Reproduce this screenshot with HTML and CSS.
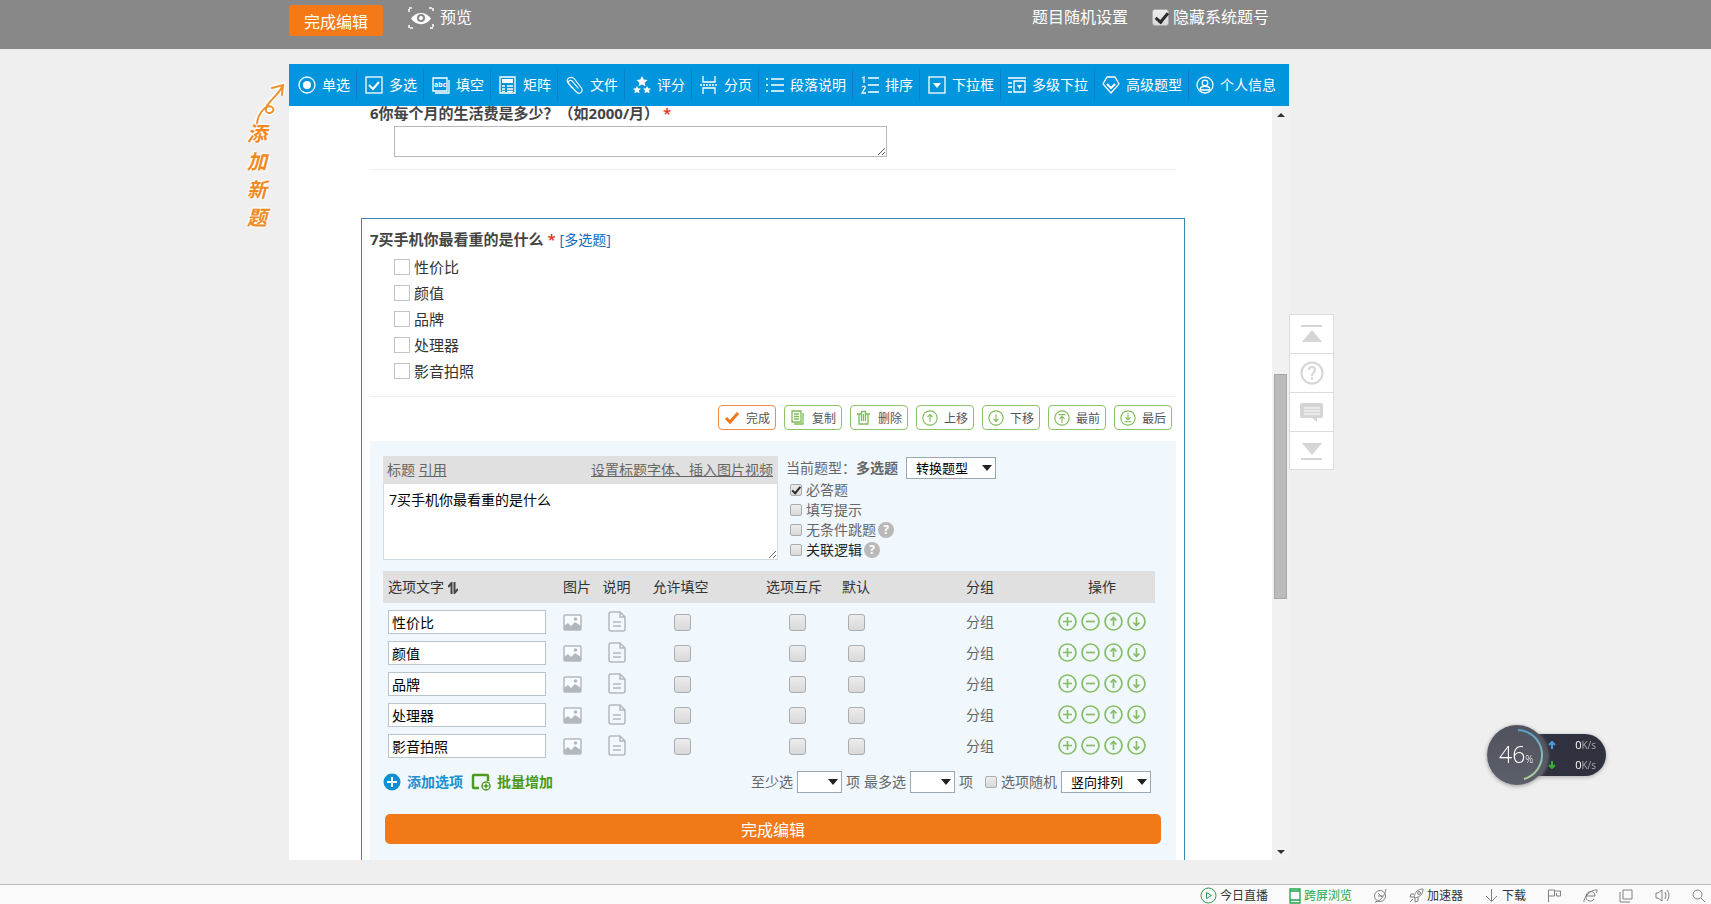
FILE: index.html
```html
<!DOCTYPE html>
<html lang="zh-CN">
<head>
<meta charset="utf-8">
<title>问卷编辑</title>
<link rel="stylesheet" href="styles.css">
</head>
<body>
<svg class="defs" aria-hidden="true">
  <symbol id="pic" viewBox="0 0 19 17"><rect x="1" y="1" width="17" height="15" rx="1" fill="#f8fcff" stroke="#b2b8bd" stroke-width="1.5"/><circle cx="12.500" cy="5" r="1.800" fill="#b2b8bd"/><path d="M1 16v-4l4-3 3 3 4-4 6 4v4z" fill="#b2b8bd"/></symbol>
  <symbol id="doc" viewBox="0 0 18 21"><path d="M3 1h9l5 5v12a2 2 0 0 1-2 2H3a2 2 0 0 1-2-2V3a2 2 0 0 1 2-2zM12 1v5h5M5 11h8M5 15h8" fill="none" stroke="#b2b8bd" stroke-width="1.500"/></symbol>
  <symbol id="plus" viewBox="0 0 19 19"><circle cx="9.500" cy="9.500" r="8.500"/><path d="M5 9.500h9M9.500 5v9"/></symbol>
  <symbol id="minus" viewBox="0 0 19 19"><circle cx="9.500" cy="9.500" r="8.500"/><path d="M5 9.500h9"/></symbol>
  <symbol id="up" viewBox="0 0 19 19"><circle cx="9.500" cy="9.500" r="8.500"/><path d="M9.500 14V5.500M6.500 8.500l3-3 3 3"/></symbol>
  <symbol id="down" viewBox="0 0 19 19"><circle cx="9.500" cy="9.500" r="8.500"/><path d="M9.500 5v8.500M6.500 10.500l3 3 3-3"/></symbol>
  <symbol id="first" viewBox="0 0 19 19"><circle cx="9.500" cy="9.500" r="8.500"/><path d="M5.500 5.500h8M9.500 15V7.500M6.500 10.500l3-3 3 3"/></symbol>
  <symbol id="last" viewBox="0 0 19 19"><circle cx="9.500" cy="9.500" r="8.500"/><path d="M5.500 14h8M9.500 4v7.500M6.500 8.500l3 3 3-3"/></symbol>
</svg>

<header class="topbar">
  <button class="btn-done" type="button">完成编辑</button>
  <a class="preview" href="#">
    <svg width="26" height="22" viewBox="0 0 26 22"><path d="M1 5V1h4M21 1h4v4M25 17v4h-4M5 21H1v-4" fill="none" stroke="#fff" stroke-width="1.500" stroke-dasharray="3 1"/><path d="M3 11.500C8 4 18 4 23 11.500 18 19 8 19 3 11.500z" fill="#fff"/><circle cx="13" cy="11" r="4" fill="#888"/><circle cx="13" cy="11" r="2" fill="#fff"/></svg>
    预览</a>
  <div class="top-right">
    <a href="#">题目随机设置</a>
    <label><input type="checkbox" class="cb cb-top" checked>隐藏系统题号</label>
  </div>
</header>

<div class="stage">
  <aside class="hint">
    <svg width="32" height="44" viewBox="0 0 32 44"><path d="M3 42C4 30 13 22 18 25c5 4-4 9-6 4C10 22 24 14 28 5M18 6l11-3-1 10" fill="none" stroke="#fff" stroke-width="5"/><path d="M3 42C4 30 13 22 18 25c5 4-4 9-6 4C10 22 24 14 28 5M18 6l11-3-1 10" fill="none" stroke="#f0912f" stroke-width="2" stroke-linecap="round"/></svg>
    <div class="hint-text"><span>添</span><span>加</span><span>新</span><span>题</span></div>
  </aside>

  <main class="editor">
    <nav class="toolbar">
      <a href="#"><svg width="18" height="18" viewBox="0 0 18 18"><circle cx="9" cy="9" r="8"/><circle cx="9" cy="9" r="4" class="f"/></svg>单选</a>
      <a href="#"><svg width="18" height="18" viewBox="0 0 18 18"><rect x="1" y="1" width="16" height="16"/><path d="M4 9l4 4 6-7" stroke-width="2"/></svg>多选</a>
      <a href="#"><svg width="18" height="18" viewBox="0 0 18 18"><path d="M1 2h14v13H1zM3 17h14V4"/><text x="2" y="11" class="abc">abc</text></svg>填空</a>
      <a href="#"><svg width="18" height="18" viewBox="0 0 18 18"><path d="M1 1h15v16H1z"/><path d="M3 3h11v4H3z" class="f"/><path d="M3 10h3M8 10h6M3 13h3M8 13h6M3 15.500h3M8 15.500h6"/></svg>矩阵</a>
      <a href="#"><svg width="18" height="18" viewBox="0 0 18 18"><path d="M12.500 12.500L6 5a2 2 0 0 0-3 3l7.500 8c3 3 7 0 5-4L8.500 3C5-1-1 3 2 7l4 5" stroke-width="1.100"/></svg>文件</a>
      <a href="#"><svg width="18" height="18" viewBox="0 0 18 18"><path class="f" d="M9 0l1.700 3.400 3.800.5-2.800 2.600.7 3.700L9 8.400l-3.400 1.800.7-3.700L3.500 3.900l3.800-.5zM4 10l1.200 2.300 2.800.4-2 1.900.5 2.700L4 16l-2.500 1.300.5-2.700-2-1.900 2.800-.4zM14 10l1.200 2.300 2.800.4-2 1.900.5 2.700L14 16l-2.500 1.300.5-2.700-2-1.900 2.800-.4z"/></svg>评分</a>
      <a href="#"><svg width="18" height="18" viewBox="0 0 18 18"><path d="M3 0v6h12V0M3 18v-6h12v6"/><path d="M0 9h18" stroke-dasharray="2 1"/></svg>分页</a>
      <a href="#" class="wide"><svg width="18" height="18" viewBox="0 0 18 18"><path d="M5 3h13M5 9h13M5 15h13M0 3h2M0 9h2M0 15h2"/></svg>段落说明</a>
      <a href="#"><svg width="18" height="18" viewBox="0 0 18 18"><path d="M7 2h11M7 9h11M7 16h11M1 2l2-1v6M1 11q4-2 3 1l-3 5h4"/></svg>排序</a>
      <a href="#"><svg width="18" height="18" viewBox="0 0 18 18"><rect x="1" y="1" width="16" height="16"/><path class="f" d="M5 7h8l-4 5z"/></svg>下拉框</a>
      <a href="#" class="wide"><svg width="18" height="18" viewBox="0 0 18 18"><path d="M0 2h18M0 7h4M0 11h4M0 16h4M6 5h11v11H6z"/><path class="f" d="M9 9h5l-2.500 4z"/></svg>多级下拉</a>
      <a href="#" class="wide"><svg width="18" height="18" viewBox="0 0 18 18"><path d="M5 1h8l4 7-8 9-8-9z"/><path d="M5 8l4 4 4-4" stroke-width="2"/></svg>高级题型</a>
      <a href="#" class="wide"><svg width="18" height="18" viewBox="0 0 18 18"><circle cx="9" cy="9" r="8"/><circle cx="9" cy="7" r="2.800"/><path d="M4 14c0-5 10-5 10 0z"/></svg>个人信息</a>
    </nav>

    <div class="viewport">
      <div class="sheet">
        <section class="q6">
          <h2 class="q-title"><label for="a6">6你每个月的生活费是多少？（如2000/月）</label> <b class="req">*</b></h2>
          <textarea id="a6" class="answer"></textarea>
        </section>

        <section class="q7">
          <h2 class="q-title">7买手机你最看重的是什么 <b class="req">*</b> <span class="kind">[多选题]</span></h2>
          <div class="choices">
            <label><input type="checkbox" class="plain">性价比</label>
            <label><input type="checkbox" class="plain">颜值</label>
            <label><input type="checkbox" class="plain">品牌</label>
            <label><input type="checkbox" class="plain">处理器</label>
            <label><input type="checkbox" class="plain">影音拍照</label>
          </div>
          <div class="actions">
            <button type="button" class="primary"><svg width="16" height="16" viewBox="0 0 16 16"><path d="M2 8l4 4 8-9" stroke="#f07818" stroke-width="3"/></svg>完成</button>
            <button type="button"><svg width="16" height="16" viewBox="0 0 16 16"><path d="M2 1h9v11H2zM4 4h5M4 6.500h5M4 9h5M13 3v11H4"/></svg>复制</button>
            <button type="button"><svg width="16" height="16" viewBox="0 0 16 16"><path d="M1 4h4M10 4h4M3 4v10h9V4M5.500 11V1.500h4V11M7.500 4v7"/></svg>删除</button>
            <button type="button"><svg width="16" height="16"><use href="#up"/></svg>上移</button>
            <button type="button"><svg width="16" height="16"><use href="#down"/></svg>下移</button>
            <button type="button"><svg width="16" height="16"><use href="#first"/></svg>最前</button>
            <button type="button"><svg width="16" height="16"><use href="#last"/></svg>最后</button>
          </div>

          <div class="config">
            <div class="config-top">
              <div class="title-box">
                <div class="title-head"><span><label for="ttl">标题</label> <a href="#">引用</a></span><a href="#">设置标题字体、插入图片视频</a></div>
                <textarea id="ttl">7买手机你最看重的是什么</textarea>
              </div>
              <div class="settings">
                <div class="type-row"><label for="type">当前题型：<b>多选题</b></label><span class="sel sel-wide"><select id="type"><option>转换题型</option></select></span></div>
                <label><input type="checkbox" class="cb cb-s" checked>必答题</label>
                <label><input type="checkbox" class="cb cb-s">填写提示</label>
                <label><input type="checkbox" class="cb cb-s">无条件跳题<i class="help">?</i></label>
                <label class="dark"><input type="checkbox" class="cb cb-s">关联逻辑<i class="help">?</i></label>
              </div>
            </div>

            <table class="opts">
              <colgroup><col class="c1"><col class="c2"><col class="c3"><col class="c4"><col class="c5"><col class="c6"><col class="c7"><col class="c8"></colgroup>
              <thead><tr><th>选项文字 <svg width="10" height="12" viewBox="0 0 10 12"><path d="M3.500 12V1L0 5M6.500 0v11L10 7" fill="none" stroke="#444" stroke-width="2"/></svg></th><th>图片</th><th>说明</th><th>允许填空</th><th>选项互斥</th><th>默认</th><th>分组</th><th>操作</th></tr></thead>
              <tbody>
                <tr><td><input type="text" aria-label="选项文字" value="性价比"></td><td><svg width="19" height="17"><use href="#pic"/></svg></td><td><svg width="18" height="21"><use href="#doc"/></svg></td><td><input type="checkbox" class="cb" aria-label="允许填空"></td><td><input type="checkbox" class="cb" aria-label="选项互斥"></td><td><input type="checkbox" class="cb" aria-label="默认"></td><td>分组</td><td><div class="ops"><svg><use href="#plus"/></svg><svg><use href="#minus"/></svg><svg><use href="#up"/></svg><svg><use href="#down"/></svg></div></td></tr>
                <tr><td><input type="text" aria-label="选项文字" value="颜值"></td><td><svg width="19" height="17"><use href="#pic"/></svg></td><td><svg width="18" height="21"><use href="#doc"/></svg></td><td><input type="checkbox" class="cb" aria-label="允许填空"></td><td><input type="checkbox" class="cb" aria-label="选项互斥"></td><td><input type="checkbox" class="cb" aria-label="默认"></td><td>分组</td><td><div class="ops"><svg><use href="#plus"/></svg><svg><use href="#minus"/></svg><svg><use href="#up"/></svg><svg><use href="#down"/></svg></div></td></tr>
                <tr><td><input type="text" aria-label="选项文字" value="品牌"></td><td><svg width="19" height="17"><use href="#pic"/></svg></td><td><svg width="18" height="21"><use href="#doc"/></svg></td><td><input type="checkbox" class="cb" aria-label="允许填空"></td><td><input type="checkbox" class="cb" aria-label="选项互斥"></td><td><input type="checkbox" class="cb" aria-label="默认"></td><td>分组</td><td><div class="ops"><svg><use href="#plus"/></svg><svg><use href="#minus"/></svg><svg><use href="#up"/></svg><svg><use href="#down"/></svg></div></td></tr>
                <tr><td><input type="text" aria-label="选项文字" value="处理器"></td><td><svg width="19" height="17"><use href="#pic"/></svg></td><td><svg width="18" height="21"><use href="#doc"/></svg></td><td><input type="checkbox" class="cb" aria-label="允许填空"></td><td><input type="checkbox" class="cb" aria-label="选项互斥"></td><td><input type="checkbox" class="cb" aria-label="默认"></td><td>分组</td><td><div class="ops"><svg><use href="#plus"/></svg><svg><use href="#minus"/></svg><svg><use href="#up"/></svg><svg><use href="#down"/></svg></div></td></tr>
                <tr><td><input type="text" aria-label="选项文字" value="影音拍照"></td><td><svg width="19" height="17"><use href="#pic"/></svg></td><td><svg width="18" height="21"><use href="#doc"/></svg></td><td><input type="checkbox" class="cb" aria-label="允许填空"></td><td><input type="checkbox" class="cb" aria-label="选项互斥"></td><td><input type="checkbox" class="cb" aria-label="默认"></td><td>分组</td><td><div class="ops"><svg><use href="#plus"/></svg><svg><use href="#minus"/></svg><svg><use href="#up"/></svg><svg><use href="#down"/></svg></div></td></tr>
              </tbody>
            </table>

            <div class="opt-foot">
              <a href="#" class="add"><svg width="18" height="18" viewBox="0 0 18 18"><circle cx="9" cy="9" r="8.500" fill="#0e8fd0"/><path d="M4 9h10M9 4v10" stroke="#fff" stroke-width="2"/></svg>添加选项</a>
              <a href="#" class="batch"><svg width="20" height="18" viewBox="0 0 20 18"><path d="M8 15H3a1 1 0 0 1-1-1V3a1 1 0 0 1 1-1h13a1 1 0 0 1 1 1v5" fill="none" stroke="#4d9a1c" stroke-width="2.500"/><circle cx="15" cy="13" r="4" fill="#fff" stroke="#4d9a1c" stroke-width="1.500"/><path d="M12.500 13h5M15 10.500v5" stroke="#4d9a1c" stroke-width="1.500"/></svg>批量增加</a>
              <div class="limits">
                <label for="min">至少选</label><span class="sel sel-s"><select id="min"><option></option></select></span><span>项</span>
                <label for="max" class="max">最多选</label><span class="sel sel-s"><select id="max"><option></option></select></span><span>项</span>
                <label class="rand"><input type="checkbox" class="cb cb-s">选项随机</label>
                <span class="sel sel-wide"><select aria-label="排列方式"><option>竖向排列</option></select></span>
              </div>
            </div>
            <button type="button" class="finish">完成编辑</button>
          </div>
        </section>
      </div>
      <div class="scroll"><i class="tri-up"></i><i class="thumb"></i><i class="tri-down"></i></div>
    </div>
  </main>

  <aside class="side">
    <a href="#" aria-label="顶部"><svg width="24" height="24" viewBox="0 0 24 24"><path d="M1 3h21v2H1zM12 8l10 12H2z"/></svg></a>
    <a href="#" aria-label="帮助"><svg width="24" height="24" viewBox="0 0 24 24"><path d="M9 9c0-4 6-4 6 0 0 3-3 2-3 6M12 16v3" fill="none" stroke="#d5d5d5" stroke-width="2"/><circle cx="12" cy="12" r="10.500" fill="none" stroke="#d5d5d5" stroke-width="2"/></svg></a>
    <a href="#" aria-label="反馈"><svg width="24" height="24" viewBox="0 0 24 24"><path d="M2 3h19a2 2 0 0 1 2 2v11a2 2 0 0 1-2 2h-4v4l-5-4H2a2 2 0 0 1-2-2V5a2 2 0 0 1 2-2z"/><path d="M4 8h16M4 11h16M4 14h16" stroke="#fff"/></svg></a>
    <a href="#" aria-label="底部"><svg width="24" height="24" viewBox="0 0 24 24"><path d="M1 19h21v2H1zM12 16L2 4h20z"/></svg></a>
  </aside>
</div>

<footer class="status">
  <a href="#"><svg width="17" height="17" viewBox="0 0 17 17"><circle cx="8.500" cy="8.500" r="7.500"/><path d="M6.500 5.500l5 3-5 3z"/></svg>今日直播</a>
  <a href="#" class="green"><svg width="12" height="16" viewBox="0 0 12 16"><path d="M1 1h10v14H1zM1 3h10M1 12h10" stroke-width="1.300"/></svg>跨屏浏览</a>
  <a href="#" aria-label="诊断"><svg width="15" height="15" viewBox="0 0 15 15"><circle cx="7" cy="8" r="5.500"/><path d="M2 14C8 13 12 7 13 1M5 5l4 4M5 8h5"/></svg></a>
  <a href="#"><svg width="15" height="15" viewBox="0 0 15 15"><path d="M5 9C6 4 9 1 14 1c0 5-3 8-8 9zM5 6H2l-1 3h4M9 9v4l-3 1v-4M1 14l3-3"/><circle cx="10" cy="5" r="1.500"/></svg>加速器</a>
  <a href="#"><svg width="15" height="15" viewBox="0 0 15 15"><path d="M7.500 1v12M2 8l5.500 5.500L13 8"/></svg>下载</a>
  <a href="#" aria-label="旗标"><svg width="15" height="15" viewBox="0 0 15 15"><path d="M1.500 14V2h6v6h-6M7.500 3h6v5h-4V5"/></svg></a>
  <a href="#" aria-label="内核"><svg width="15" height="15" viewBox="0 0 15 15"><path d="M3 8h9c0-6-8-6-9 0-1 5 6 7 8 3M1 14C0 10 8 1 14 2c0 1 0 2-1 3"/></svg></a>
  <a href="#" aria-label="窗口"><svg width="15" height="15" viewBox="0 0 15 15"><path d="M4 2h9v9H4zM1 4v10h10"/></svg></a>
  <a href="#" aria-label="声音"><svg width="15" height="15" viewBox="0 0 15 15"><path d="M1 5h2l4-3v11l-4-3H1zM10 4q2 3 0 7M12 2q4 5 0 11"/></svg></a>
  <a href="#" aria-label="搜索"><svg width="15" height="15" viewBox="0 0 15 15"><circle cx="6.500" cy="6.500" r="4.500"/><path d="M10 10l4 4"/></svg></a>
</footer>

<div class="meter">
  <div class="meter-pill">
    <span><svg width="8" height="8" viewBox="0 0 8 8"><path d="M4 8V2M1 4l3-3 3 3" stroke="#4b9be0"/></svg>0<small>K/s</small></span>
    <span><svg width="8" height="8" viewBox="0 0 8 8"><path d="M4 0v6M1 4l3 3 3-3" stroke="#37b035"/></svg>0<small>K/s</small></span>
  </div>
  <div class="meter-dial">46<small>%</small>
    <svg class="arc" viewBox="0 0 60 60"><defs><linearGradient id="g" x1="0" y1="0" x2="0" y2="1"><stop offset="0" stop-color="#5a9fc8"/><stop offset="1" stop-color="#b5d49a"/></linearGradient></defs><path d="M31 5a25 25 0 0 1 6 49" fill="none" stroke="url(#g)" stroke-width="2"/></svg>
  </div>
</div>
</body>
</html>
```
FILE: styles.css
```css
* { box-sizing: border-box; }
body {
  margin: 0;
  height: 100vh;
  display: flex;
  flex-direction: column;
  overflow: hidden;
  background: #efefef;
  color: #444;
  font: 14px/20px "Open Sans", "Noto Sans CJK SC", sans-serif;
}
a { color: inherit; text-decoration: none; }
svg { flex: none; }
button, input, select, textarea { font-family: inherit; margin: 0; }
.defs { display: none; }

.topbar {
  flex: none;
  height: 49px;
  padding: 5px 0 0 289px;
  display: flex;
  align-items: flex-start;
  background: #888;
  color: #fff;
  font-size: 16px;
  line-height: 24px;
}
.btn-done {
  width: 94px;
  height: 31px;
  padding: 0;
  border: 0;
  border-radius: 3px;
  background: #f57a17;
  color: #fff;
  font-size: 16px;
}
.preview { display: flex; gap: 6px; margin-left: 25px; }
.preview svg { margin-top: 2px; }
.top-right { display: flex; gap: 24px; margin-left: 560px; white-space: nowrap; }
.top-right label { display: flex; align-items: center; gap: 4px; }

.cb {
  appearance: none;
  position: relative;
  width: 17px;
  height: 17px;
  flex: none;
  border: 1px solid #a9adb1;
  border-radius: 3px;
  background: linear-gradient(#ececec, #d9d9d9);
  vertical-align: middle;
}
.cb-s { width: 12px; height: 12px; border-radius: 2px; }
.cb:checked::after {
  content: "";
  position: absolute;
  left: 30%;
  top: 0;
  width: 30%;
  height: 65%;
  border: solid #2b2b2b;
  border-width: 0 3px 3px 0;
  transform: rotate(40deg);
}
.cb-s:checked::after { border-width: 0 2px 2px 0; }

.stage {
  flex: 1;
  min-height: 0;
  padding: 15px 0 24px;
  display: grid;
  grid-template-columns: 289px minmax(0, 1000px) 45px;
  grid-template-rows: minmax(0, 1fr);
}
.hint { padding: 18px 0 0 242px; }
.hint svg { display: block; margin-left: 12px; }
.hint-text {
  display: flex;
  flex-direction: column;
  width: 30px;
  align-items: center;
  margin-top: -6px;
  color: #ef8a22;
  font-size: 20px;
  font-weight: bold;
  font-style: italic;
  line-height: 28px;
  text-shadow: 0 0 2px #fff, 1px 1px 2px #fff, -1px -1px 2px #fff;
}

.editor { display: flex; flex-direction: column; min-height: 0; }
.toolbar {
  flex: none;
  height: 42px;
  padding: 5px 0;
  display: flex;
  background: #0095dc;
  color: #fff;
}
.toolbar a {
  display: flex;
  align-items: center;
  gap: 6px;
  padding: 0 6px 0 8px;
  border-right: 1px solid #0b80c8;
  white-space: nowrap;
}
.toolbar a:first-child { padding-left: 9px; }
.toolbar a:last-child { border: 0; }
.toolbar .wide { padding-left: 7px; }
.toolbar svg { fill: none; stroke: #fff; stroke-width: 1.3; }
.toolbar .f { fill: #fff; stroke: none; }
.toolbar .abc { fill: #fff; stroke: none; font-size: 7px; font-weight: bold; }

.viewport { flex: 1; min-height: 0; display: flex; overflow: hidden; background: #fff; }
.sheet { flex: 1; min-width: 0; padding: 0 87px 0 72px; overflow: hidden; }
.scroll {
  width: 17px;
  padding: 7px 2px 6px;
  display: flex;
  flex-direction: column;
  align-items: center;
  background: #f1f1f1;
}
.tri-up, .tri-down { border: 4px solid transparent; }
.tri-up { border-top: 0; border-bottom-color: #333; }
.tri-down { border-bottom: 0; border-top-color: #333; margin-top: auto; }
.thumb { width: 13px; height: 225px; margin-top: 257px; background: #bbb; border: 1px solid #a8a8a8; }

.q-title { margin: 0; font-size: 15px; line-height: 24px; }
.q-title .req { color: #e03010; font-weight: 600; }
.kind { color: #0f6cc0; font-size: 14px; font-weight: normal; }
.q6 { margin: 0 9px; padding-bottom: 12px; border-bottom: 1px solid #ececec; }
.q6 .q-title { line-height: 14px; }
textarea { display: block; resize: both; outline: 0; }
.answer { width: 493px; height: 31px; margin: 6px 0 0 24px; border: 1px solid #b8b8b8; }

.q7 { margin-top: 48px; padding: 8px 8px 0; border: 1px solid #3589b4; }
.choices { padding: 2px 0 12px 24px; color: #333; font-size: 15px; line-height: 26px; border-bottom: 1px solid #ececec; }
.choices label { display: flex; align-items: center; gap: 4px; }
.plain { appearance: none; width: 16px; height: 16px; border: 1px solid #c4c4c4; background: #fff; }

.actions { display: flex; justify-content: flex-end; gap: 8px; padding: 8px 4px 11px; }
.actions button {
  width: 58px;
  height: 25px;
  padding: 0 5px;
  display: flex;
  align-items: center;
  justify-content: space-between;
  border: 1px solid #8dc266;
  border-radius: 4px;
  background: #fff;
  color: #555;
  font-size: 12px;
  white-space: nowrap;
}
.actions .primary { border-color: #ee8d45; }
.actions svg { fill: none; stroke: #7dbb55; stroke-width: 1.3; }

.config { padding: 15px 15px 40px 13px; background: #f0f8fe; color: #666; }
.config-top { display: flex; gap: 8px; }
.title-box { width: 395px; }
.title-head { display: flex; justify-content: space-between; padding: 4px 5px 4px 4px; background: #e0e0e0; }
.title-head a { text-decoration: underline; }
.title-box textarea {
  width: 100%;
  height: 76px;
  padding: 6px 5px;
  border: 1px solid #d3dbe2;
  border-top: 0;
  background: #fff;
  color: #000;
  font-size: 14px;
  line-height: 20px;
}
.settings { display: flex; flex-direction: column; }
.settings > label { display: flex; align-items: center; gap: 4px; padding-left: 4px; }
.type-row { display: flex; align-items: center; gap: 8px; height: 24px; }
.dark { color: #222; }
.help {
  width: 16px;
  height: 16px;
  margin-left: -2px;
  border-radius: 50%;
  background: #b9b9b9;
  color: #fff;
  font: bold 12px/16px "Open Sans", sans-serif;
  text-align: center;
}
.sel { position: relative; display: inline-block; }
.sel::after {
  content: "";
  position: absolute;
  right: 4px;
  top: 8px;
  border: 5px solid transparent;
  border-top: 6px solid #222;
  border-bottom: 0;
  pointer-events: none;
}
.sel select {
  display: block;
  appearance: none;
  width: 100%;
  height: 22px;
  padding: 0 9px;
  border: 1px solid #9aa8b4;
  border-radius: 0;
  background: #fff;
  color: #000;
  font-size: 13px;
}
.sel-wide { width: 90px; }
.sel-s { width: 45px; }

.opts { width: 772px; margin-top: 11px; border-collapse: collapse; table-layout: fixed; }
.c1 { width: 170px; } .c2 { width: 45px; } .c3 { width: 37px; } .c4 { width: 95px; }
.c5 { width: 102px; } .c6 { width: 48px; } .c7 { width: 169px; } .c8 { width: 106px; }
.opts th { height: 32px; padding: 0; background: #e0e0e0; color: #333; font-weight: normal; white-space: nowrap; }
.opts td { height: 31px; padding: 0; text-align: center; }
.opts tbody::before { content: ""; display: table-row; height: 3px; }
.opts tr > :nth-child(1) { text-align: left; padding-left: 5px; }
.opts tr > :nth-child(2) { text-align: left; padding-left: 10px; }
.opts tr > :nth-child(5) { padding-left: 32px; }
.opts tr > :nth-child(7) { padding-left: 31px; }
.opts th:nth-child(4) { padding-right: 4px; }
.opts th:nth-child(5) { padding-right: 6px; }
.opts svg { vertical-align: middle; }
.opts td input[type="text"] {
  display: block;
  width: 158px;
  height: 24px;
  padding: 0 3px;
  border: 1px solid #b9c4cd;
  background: #fff;
  color: #000;
  font-size: 14px;
}
.ops { display: flex; justify-content: center; gap: 4px; }
.ops svg { width: 19px; height: 19px; fill: none; stroke: #86bd64; stroke-width: 1.7; }

.opt-foot { display: flex; align-items: center; margin-top: 10px; padding-right: 10px; white-space: nowrap; }
.opt-foot > a { display: flex; align-items: center; gap: 6px; font-weight: bold; }
.add { color: #1b8fd2; }
.batch { color: #4a9a18; margin-left: 8px; }
.limits { display: flex; align-items: center; gap: 4px; margin-left: auto; }
.rand { display: flex; align-items: center; gap: 4px; margin-left: 8px; }
.finish {
  display: block;
  width: calc(100% - 2px);
  height: 30px;
  margin: 21px 0 0 2px;
  padding: 0;
  border: 0;
  border-radius: 5px;
  background: #f17918;
  color: #fff;
  font-size: 16px;
}

.side { padding-top: 250px; }
.side a {
  display: flex;
  align-items: center;
  justify-content: center;
  height: 39px;
  border: 1px solid #dcdcdc;
  border-bottom: 0;
  background: #fff;
}
.side a:last-child { border-bottom: 1px solid #dcdcdc; }
.side svg { fill: #d5d5d5; }

.status {
  flex: none;
  height: 20px;
  padding: 2px 5px 0 0;
  display: flex;
  align-items: center;
  justify-content: flex-end;
  gap: 21px;
  border-top: 1px solid #b9b9b9;
  background: #fafafa;
  color: #333;
  font-size: 12px;
  line-height: 16px;
}
.status a { display: flex; align-items: center; gap: 3px; }
.status svg { fill: none; stroke: #808080; }
.status a:first-child svg { stroke: #2f9a50; }
.status .green { color: #1aa84e; }
.status .green svg { stroke: #1aa84e; }

.meter { position: fixed; right: 105px; bottom: 119px; width: 119px; height: 60px; color: #fff; }
.meter-pill {
  position: absolute;
  inset: 9px 0 9px 30px;
  padding: 1px 10px 1px 31px;
  border-radius: 21px;
  background: #2f313f;
  font-size: 11px;
  box-shadow: 0 1px 4px #aaa;
}
.meter-pill span { display: flex; align-items: center; height: 20px; }
.meter-pill svg { margin-right: auto; fill: none; stroke-width: 2; }
.meter-pill small { font-size: 10px; color: #aaa; }
.meter-dial {
  position: absolute;
  left: 0;
  top: 0;
  width: 60px;
  height: 60px;
  border-radius: 50%;
  background: linear-gradient(#50525d, #5c606b);
  font-size: 23px;
  line-height: 59px;
  padding-left: 12px;
  font-weight: 300;
  white-space: nowrap;
  box-shadow: 0 1px 4px #999;
}
.meter-dial small { font-size: 10px; }
.arc { position: absolute; inset: 0; }
```
